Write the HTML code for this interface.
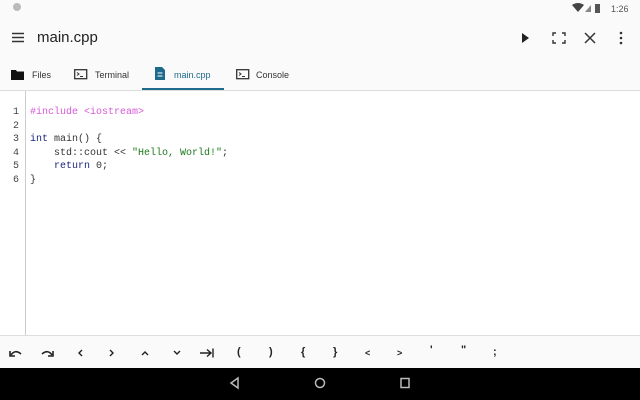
<!DOCTYPE html>
<html><head><style>
*{margin:0;padding:0;box-sizing:border-box}
body{width:640px;height:400px;background:#fafafa;font-family:"Liberation Sans",sans-serif;position:relative;overflow:hidden;color:#222}
.abs{position:absolute}
.code{font-family:"Liberation Mono",monospace;font-size:10px;line-height:13.6px;white-space:pre}
.tab{position:absolute;top:70px;font-size:9px;color:#333}
.bk{position:absolute;top:346px;font-size:11px;color:#222;font-family:"Liberation Sans",sans-serif;font-weight:bold}
</style></head><body>
<div class="abs" style="left:13px;top:3px;width:8px;height:8px;border-radius:50%;background:#bbb"></div>
<svg class="abs" style="left:570px;top:2px" width="70" height="12">
<path d="M2 3 Q8 -1 14 3 L8 10Z" fill="#444"/>
<path d="M15 10 L21 3 L21 10Z" fill="#888"/>
<rect x="25" y="2" width="5" height="9" fill="#555"/>
<text x="41" y="10" font-size="9" fill="#555" font-family="Liberation Sans">1:26</text>
</svg>
<svg class="abs" style="left:12px;top:32px" width="14" height="12"><path d="M0 1.5H12M0 5.5H12M0 9.5H12" stroke="#333" stroke-width="1.6"/></svg>
<div class="abs" style="left:37px;top:29px;font-size:15px;color:#222">main.cpp</div>
<svg class="abs" style="left:515px;top:30px" width="120" height="16">
<path d="M7 3 L14 8 L7 13Z" fill="#222"/>
<path d="M38 6V3H41M47 3H50V6M50 10V13H47M41 13H38V10" stroke="#333" stroke-width="1.4" fill="none"/>
<path d="M70 3L80 13M80 3L70 13" stroke="#333" stroke-width="1.5"/>
<circle cx="106" cy="3" r="1.3" fill="#333"/><circle cx="106" cy="8" r="1.3" fill="#333"/><circle cx="106" cy="13" r="1.3" fill="#333"/>
</svg>
<svg class="abs" style="left:11px;top:69px" width="14" height="11"><path d="M0 1H5L6 2.5H13V11H0Z" fill="#111"/></svg>
<div class="tab" style="left:32px">Files</div>
<svg class="abs" style="left:74px;top:69px" width="14" height="11"><rect x=".7" y=".7" width="12" height="9" fill="none" stroke="#333" stroke-width="1.3"/><path d="M3 3.5L5 5L3 6.5M6 7.5H9" stroke="#333" fill="none"/></svg>
<div class="tab" style="left:95px">Terminal</div>
<svg class="abs" style="left:155px;top:67px" width="11" height="13"><path d="M0 0H7L10 3V13H0Z" fill="#1e6a8d"/><path d="M2.5 6H7.5M2.5 9H7.5" stroke="#fff"/></svg>
<div class="tab" style="left:174px;color:#1e6a8d">main.cpp</div>
<div class="abs" style="left:142px;top:88px;width:82px;height:2px;background:#1e6a8d"></div>
<svg class="abs" style="left:236px;top:69px" width="14" height="11"><rect x=".7" y=".7" width="12" height="9" fill="none" stroke="#333" stroke-width="1.3"/><path d="M3 3.5L5 5L3 6.5M6 7.5H9" stroke="#333" fill="none"/></svg>
<div class="tab" style="left:256px">Console</div>
<div class="abs" style="left:0;top:90px;width:640px;height:1px;background:#ddd"></div>
<div class="abs" style="left:0;top:91px;width:640px;height:244px;background:#fff"></div>
<div class="abs" style="left:25px;top:91px;width:1px;height:244px;background:#ccc"></div>
<div class="abs code" style="left:13px;top:106px;color:#444">1
2
3
4
5
6</div>
<div class="abs code" style="left:30px;top:106px;color:#333"><span style="color:#d65ad6">#include &lt;iostream&gt;</span>

<span style="color:#1a237e">int</span> main() {
    std::cout &lt;&lt; <span style="color:#1b7a1b">"Hello, World!"</span>;
    <span style="color:#1a237e">return</span> 0;
}</div>
<div class="abs" style="left:0;top:335px;width:640px;height:1px;background:#ddd"></div>
<svg class="abs" style="left:8px;top:346px" width="50" height="14">
<path d="M3 9 Q7 3 13 8" stroke="#222" stroke-width="1.6" fill="none"/><path d="M2 5V10H7" stroke="#222" stroke-width="1.6" fill="none"/>
<path d="M44 9 Q40 3 34 8" stroke="#222" stroke-width="1.6" fill="none"/><path d="M45 5V10H40" stroke="#222" stroke-width="1.6" fill="none"/>
</svg>
<svg class="abs" style="left:60px;top:345px" width="160" height="16">
<path d="M22 5L19 8L22 11M50 5L53 8L50 11M82 10L85 7L88 10M114 6L117 9L120 6" stroke="#222" stroke-width="1.4" fill="none"/>
<path d="M140 8H151M147 4.5L151 8L147 11.5M153 3.5V12.5" stroke="#222" stroke-width="1.4" fill="none"/>
</svg>
<div class="bk" style="left:237px">(</div>
<div class="bk" style="left:269px">)</div>
<div class="bk" style="left:301px">{</div>
<div class="bk" style="left:333px">}</div>
<div class="bk" style="left:365px;font-size:9px;top:348px">&lt;</div>
<div class="bk" style="left:397px;font-size:9px;top:348px">&gt;</div>
<div class="bk" style="left:430px;top:344px">'</div>
<div class="bk" style="left:461px;top:344px">"</div>
<div class="bk" style="left:493px">;</div>
<div class="abs" style="left:0;top:368px;width:640px;height:32px;background:#000"></div>
<svg class="abs" style="left:225px;top:375px" width="190" height="16">
<path d="M13 3L6 8L13 13Z" stroke="#bbb" stroke-width="1.5" fill="none"/>
<circle cx="95" cy="8" r="4.5" stroke="#bbb" stroke-width="1.5" fill="none"/>
<rect x="176" y="3.5" width="8" height="9" stroke="#bbb" stroke-width="1.5" fill="none"/>
</svg>
</body></html>
